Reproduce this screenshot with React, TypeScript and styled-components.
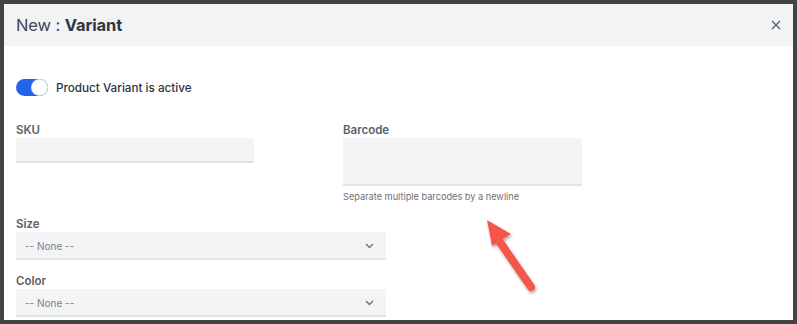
import React from "react";
import styled, { createGlobalStyle } from "styled-components";

const GlobalStyle = createGlobalStyle`
  html, body {
    margin: 0;
    padding: 0;
    background: #434343;
  }
  * { box-sizing: border-box; }
`;

const Frame = styled.div`
  position: relative;
  width: 797px;
  height: 324px;
  padding: 4px;
  background: #434343;
  overflow: hidden;
`;

const Modal = styled.div`
  background: #fff;
  height: 100%;
  overflow: hidden;
  font-family: Inter, "Liberation Sans", sans-serif;
  color: #333a44;
`;

const Header = styled.div`
  height: 42px;
  background: #f2f3f5;
  display: flex;
  align-items: center;
  justify-content: space-between;
  padding: 0 9px 0 12px;
`;

const Title = styled.h1`
  margin: 0;
  font-size: 16.5px;
  font-weight: 400;
  color: #3f4653;
  letter-spacing: -0.1px;

  b {
    font-weight: 700;
    color: #2f3642;
  }
`;

const Close = styled.button`
  border: 0;
  background: none;
  padding: 0;
  width: 16px;
  height: 16px;
  display: flex;
  align-items: center;
  justify-content: center;
  color: #5d6470;
`;

const Body = styled.div`
  padding: 33px 12px 0 12px;
`;

const ToggleRow = styled.label`
  display: flex;
  align-items: center;
  gap: 8px;
  font-size: 11.7px;
  font-weight: 500;
  color: #2e3440;
  margin-bottom: 26px;
`;

const Switch = styled.span<{ $on: boolean }>`
  position: relative;
  width: 32px;
  height: 17px;
  border-radius: 9px;
  background: ${(p) => (p.$on ? "#2563eb" : "#d1d5db")};
  flex-shrink: 0;

  &::after {
    content: "";
    position: absolute;
    top: 1px;
    left: ${(p) => (p.$on ? "16px" : "1px")};
    width: 15px;
    height: 15px;
    border-radius: 50%;
    background: #fff;
    box-shadow: 0 0 0 1px #e3e5ea;
  }
`;

const Grid = styled.div`
  display: grid;
  grid-template-columns: 327px 327px;
  align-items: start;
`;

const Field = styled.div<{ $w: number; $gap?: number }>`
  width: ${(p) => p.$w}px;
  margin-bottom: ${(p) => p.$gap ?? 14}px;
`;

const Label = styled.div`
  font-size: 11.5px;
  font-weight: 600;
  color: #5a6068;
  line-height: 13px;
  padding-top: 2px;
  margin-bottom: 1px;
`;

const Input = styled.div<{ $h: number }>`
  height: ${(p) => p.$h}px;
  background: #f4f4f6;
  border-bottom: 2px solid #e2e4e8;
`;

const Select = styled.div`
  height: 28px;
  background: #f3f4f6;
  border-bottom: 2px solid #e2e4e8;
  display: flex;
  align-items: center;
  justify-content: space-between;
  padding: 1px 12px 0 9px;
  font-size: 10px;
  color: #7b818b;
`;

const Help = styled.div`
  margin-top: 5px;
  font-size: 9.2px;
  color: #6b717b;
`;

const Arrow = styled.svg`
  position: absolute;
  left: 478px;
  top: 212px;
  overflow: visible;
`;

const Chevron = () => (
  <svg width="9" height="6" viewBox="0 0 9 6">
    <path d="M1 1l3.5 3.5L8 1" fill="none" stroke="#6b717b" strokeWidth="1.4" />
  </svg>
);

export default function App() {
  return (
    <>
      <GlobalStyle />
      <Frame>
        <Modal>
          <Header>
            <Title>
              New : <b>Variant</b>
            </Title>
            <Close aria-label="Close">
              <svg width="10" height="10" viewBox="0 0 10 10">
                <path d="M1 1l8 8M9 1l-8 8" stroke="#5d6470" strokeWidth="1.4" />
              </svg>
            </Close>
          </Header>
          <Body>
            <ToggleRow>
              <Switch $on />
              Product Variant is active
            </ToggleRow>
            <Grid>
              <Field $w={238}>
                <Label>SKU</Label>
                <Input $h={25} />
              </Field>
              <Field $w={239}>
                <Label>Barcode</Label>
                <Input $h={48} />
                <Help>Separate multiple barcodes by a newline</Help>
              </Field>
            </Grid>
            <Field $w={370} $gap={13}>
              <Label>Size</Label>
              <Select>
                -- None --
                <Chevron />
              </Select>
            </Field>
            <Field $w={370}>
              <Label>Color</Label>
              <Select>
                -- None --
                <Chevron />
              </Select>
            </Field>
          </Body>
        </Modal>
        <Arrow width="70" height="90" viewBox="0 0 70 90">
          <defs>
            <filter id="sh" x="-50%" y="-50%" width="200%" height="200%">
              <feDropShadow dx="1" dy="2" stdDeviation="1.5" floodColor="#000" floodOpacity="0.35" />
            </filter>
          </defs>
          <g filter="url(#sh)">
            <path d="M53 75L17 23" stroke="#f4574a" strokeWidth="8" strokeLinecap="round" />
            <path d="M9 8L33 22L14 34Z" fill="#f4574a" />
          </g>
        </Arrow>
      </Frame>
    </>
  );
}
